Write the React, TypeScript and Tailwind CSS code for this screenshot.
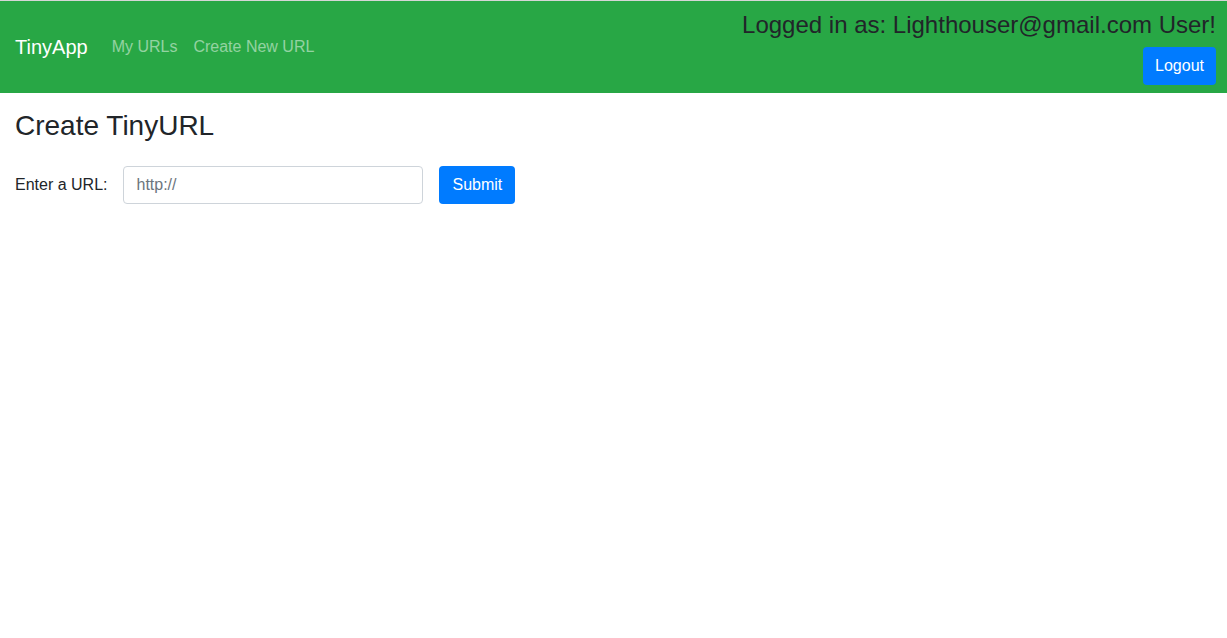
import React from "react";

const App = () => {
  return (
    <div className="min-h-screen bg-white text-[#212529] font-['Liberation_Sans',Arial,sans-serif] text-base border-t border-[#d6d6d6]">
      <nav className="bg-[#28a745] flex justify-between items-center pl-[15px] pr-[11px] py-2 h-[92px]">
        <div className="flex items-center">
          <a href="#" className="text-white text-xl mr-4 leading-[30px]">
            TinyApp
          </a>
          <a href="#" className="text-white/50 px-2 leading-6">
            My URLs
          </a>
          <a href="#" className="text-white/50 px-2 leading-6">
            Create New URL
          </a>
        </div>
        <div className="flex flex-col items-end">
          <h4 className="text-2xl leading-[29px] text-[#212529] mb-2">
            Logged in as: Lighthouser@gmail.com User!
          </h4>
          <button className="bg-[#007bff] text-white rounded px-3 h-[38px] leading-6">
            Logout
          </button>
        </div>
      </nav>
      <main className="px-[15px] pt-4">
        <h3 className="text-[28px] leading-[34px] mb-[23px]">Create TinyURL</h3>
        <form className="flex items-center" onSubmit={(e) => e.preventDefault()}>
          <label className="leading-6">Enter a URL:</label>
          <input
            type="text"
            placeholder="http://"
            className="ml-4 w-[300px] h-[38px] px-3 border border-[#ced4da] rounded placeholder:text-[#6c757d] outline-none"
          />
          <button
            type="submit"
            className="ml-4 bg-[#007bff] text-white rounded px-[13px] h-[38px] leading-6"
          >
            Submit
          </button>
        </form>
      </main>
    </div>
  );
};

export default App;
